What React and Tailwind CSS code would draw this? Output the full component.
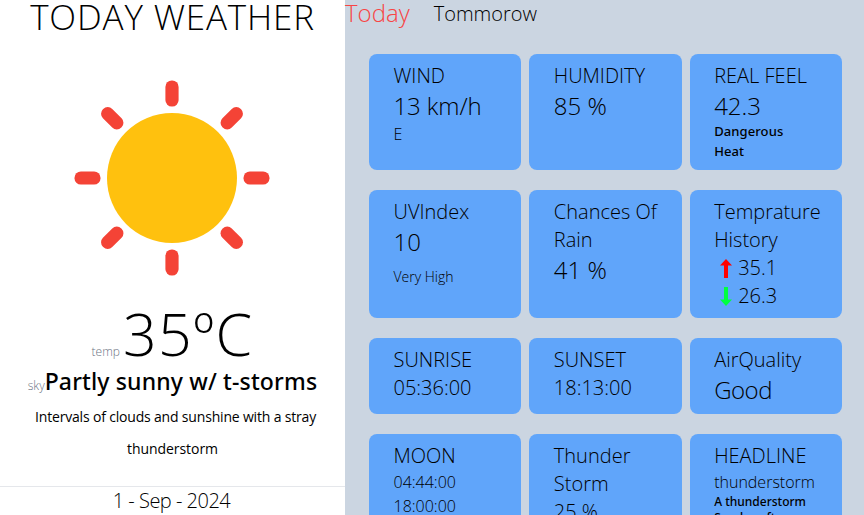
const rays = [0, 45, 90, 135, 180, 225, 270, 315];

function Sun() {
  return (
    <svg viewBox="0 0 196 196" className="mr-px h-[196px] w-[196px] shrink-0">
      {rays.map((angle) => (
        <rect key={angle} x="91.4" y="0.5" width="13.2" height="26" rx="6.4" fill="#f44336" transform={`rotate(${angle} 98 98)`} />
      ))}
      <circle cx="98" cy="98" r="65" fill="#ffc10e" />
    </svg>
  );
}

function Arrow({ down }) {
  return (
    <svg viewBox="0 0 12 19" className={down ? "h-[19px] w-3 rotate-180" : "h-[19px] w-3"}>
      <path d="M6 0L12 6.5H8V19H4V6.5H0Z" fill={down ? "#00ff40" : "#ff0000"} />
    </svg>
  );
}

function Card({ title, children }) {
  return (
    <div className="rounded-lg bg-[#60a5fa] py-2 pr-5 pl-[24.5px]">
      <p className="text-[20px] leading-7">{title}</p>
      {children}
    </div>
  );
}

export default function App() {
  return (
    <div className="flex h-[515px] overflow-hidden font-['Open_Sans',sans-serif] font-light whitespace-nowrap text-black">
      <section className="flex w-[345px] shrink-0 flex-col items-center bg-white">
        <h1 className="h-[80px] text-[35px] leading-[34px] tracking-[0.85px]">TODAY WEATHER</h1>
        <Sun />
        <div className="mt-[25px] flex h-[64px] items-baseline">
          <span className="mr-[3px] text-[12px] leading-4 text-gray-500">temp</span>
          <span className="text-[59px] leading-[64px] tracking-[1.3px]">35ºC</span>
        </div>
        <div className="flex h-8 items-baseline">
          <span className="text-[12px] leading-4 text-gray-500">sky</span>
          <span className="font-['Noto_Sans',sans-serif] text-[23px] leading-8 font-medium tracking-[0.15px]">Partly sunny w/ t-storms</span>
        </div>
        <p className="mt-1 pl-1.5 text-center text-[14px] leading-8 font-normal tracking-[-0.18px]">
          <span>Intervals of clouds and sunshine with a stray</span>
          <br />
          <span className="mr-1.5 tracking-[-0.05px]">thunderstorm</span>
        </p>
        <div className="mt-[21px] w-full border-t border-gray-200 pr-0.5 text-center text-[20px] leading-7 tracking-[-0.5px]">1 - Sep - 2024</div>
      </section>
      <main className="w-[519px] shrink-0 bg-[#cbd5e1]">
        <nav className="flex h-[54px] items-start gap-6">
          <span className="text-[24px] leading-[26px] text-[#f84444]">Today</span>
          <span className="text-[20px] leading-7">Tommorow</span>
        </nav>
        <div className="ml-6 grid w-[473px] grid-cols-3 gap-x-2 gap-y-5">
          <Card title="WIND">
            <p className="text-[24px] leading-8 tracking-[-0.1px]">13 km/h</p>
            <p className="text-[16px] leading-6">E</p>
          </Card>
          <Card title="HUMIDITY">
            <p className="text-[24px] leading-8">85 %</p>
          </Card>
          <Card title="REAL FEEL">
            <p className="text-[24px] leading-8">42.3</p>
            <p className="-mt-px mb-px font-['Noto_Sans',sans-serif] text-[13px] leading-5 font-medium tracking-[0.1px]">Dangerous<br />Heat</p>
          </Card>
          <Card title="UVIndex">
            <p className="text-[24px] leading-8">10</p>
            <p className="mt-[9px] text-[14px] leading-5">Very High</p>
          </Card>
          <Card title={<>Chances Of<br />Rain</>}>
            <p className="text-[24px] leading-8">41 %</p>
          </Card>
          <Card title={<>Temprature<br />History</>}>
            <p className="flex items-center gap-1.5 pl-1.5 text-[20px] leading-7"><Arrow />35.1</p>
            <p className="flex items-center gap-1.5 pl-1.5 text-[20px] leading-7"><Arrow down />26.3</p>
          </Card>
          <Card title="SUNRISE"><p className="text-[20px] leading-7">05:36:00</p></Card>
          <Card title="SUNSET"><p className="text-[20px] leading-7">18:13:00</p></Card>
          <Card title="AirQuality"><p className="text-[24px] leading-8 tracking-[-0.5px]">Good</p></Card>
          <Card title="MOON">
            <p className="text-[16px] leading-6">04:44:00<br />18:00:00</p>
          </Card>
          <Card title={<>Thunder<br />Storm</>}><p className="text-[20px] leading-7">25 %</p></Card>
          <Card title="HEADLINE">
            <p className="text-[16px] leading-6">thunderstorm</p>
            <p className="font-['Noto_Sans',sans-serif] text-[12px] leading-4 font-medium">A thunderstorm<br />Sunday afternoon</p>
          </Card>
        </div>
      </main>
    </div>
  );
}
